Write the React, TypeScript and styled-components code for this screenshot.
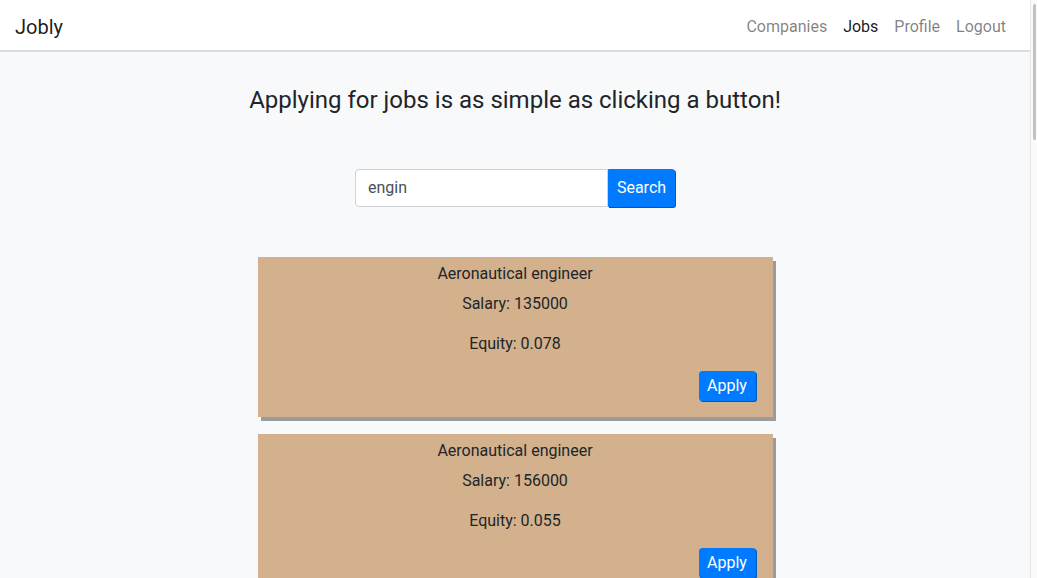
import React, { useState } from "react";
import styled, { createGlobalStyle } from "styled-components";

const GlobalStyle = createGlobalStyle`
  html, body {
    margin: 0;
    padding: 0;
    overflow: hidden;
  }
  body {
    background-color: #f8f9fa;
    color: #212529;
    font-family: Roboto, "Noto Sans", "Liberation Sans", sans-serif;
    font-size: 16px;
    line-height: 1.5;
  }
  *, *::before, *::after { box-sizing: border-box; }
`;

const Page = styled.div`
  display: flex;
  height: 100vh;
`;

const Content = styled.div`
  flex: 1;
  min-width: 0;
  overflow: hidden;
`;

// the page's scrollbar, as the browser draws it in the screenshot
const ScrollTrack = styled.div`
  flex: 0 0 7px;
  padding: 4px 1px 0 2px;
  background: #fafafa;
  border-left: 1px solid #e6e6e6;
`;

const ScrollThumb = styled.div`
  height: 136px;
  background: #c2c2c2;
  border-radius: 3px;
`;

const NavBar = styled.nav`
  display: flex;
  align-items: center;
  justify-content: space-between;
  height: 52px;
  padding: 4px 16px 0 15px;
  background: #fff;
  border-bottom: 2px solid #dcdcdc;
`;

const Brand = styled.a`
  font-size: 20px;
  color: rgba(0, 0, 0, 0.9);
  text-decoration: none;
`;

const NavLinks = styled.div`
  display: flex;
`;

const NavLink = styled.a<{ $active?: boolean }>`
  padding: 0 8px;
  font-size: 16px;
  color: ${(p) => (p.$active ? "rgba(0,0,0,0.9)" : "rgba(0,0,0,0.5)")};
  text-decoration: none;
  cursor: pointer;
`;

const Main = styled.main`
  display: flex;
  flex-direction: column;
  align-items: center;
  padding-top: 34px;
`;

const Heading = styled.h4`
  margin: 0 0 54px;
  font-size: 24px;
  font-weight: 400;
  line-height: 1.2;
`;

const SearchForm = styled.form`
  display: flex;
  margin-bottom: 50px;
`;

const SearchInput = styled.input`
  width: 253px;
  height: 38px;
  padding: 6px 12px;
  font: inherit;
  font-size: 16px;
  color: #495057;
  background: #fff;
  border: 1px solid #ced4da;
  border-radius: 4px 0 0 4px;
  outline: none;
`;

const BlueButton = styled.button`
  font: inherit;
  font-size: 16px;
  color: #fff;
  background-color: #007bff;
  border: 1px solid #007bff;
  border-radius: 3px;
  box-shadow: 1px 1px 0 #0059b8;
  cursor: pointer;
`;

const SearchButton = styled(BlueButton)`
  height: 38px;
  width: 67px;
  padding: 0;
  border-radius: 0 3px 3px 0;
`;

const ApplyButton = styled(BlueButton)`
  height: 30px;
  width: 57px;
  padding: 0;
  line-height: 28px;
`;

const JobList = styled.div`
  display: flex;
  flex-direction: column;
  gap: 17px;
  width: 515px;
  padding-bottom: 30px;
`;

const Card = styled.div`
  display: flex;
  flex-direction: column;
  align-items: center;
  padding: 7px 17px 16px;
  background-color: #d3b18d;
  box-shadow: 3px 4px 0 #9b9b9b;
`;

const JobTitle = styled.h6`
  margin: 0 0 9px;
  font-size: 16px;
  font-weight: 400;
  line-height: 1.2;
`;

const Detail = styled.p<{ $last?: boolean }>`
  margin: 0 0 ${(p) => (p.$last ? "15px" : "16px")};
`;

const ButtonRow = styled.div`
  display: flex;
  justify-content: flex-end;
  width: 100%;
`;

interface Job {
  title: string;
  salary: number;
  equity: string;
}

const jobs: Job[] = [
  { title: "Aeronautical engineer", salary: 135000, equity: "0.078" },
  { title: "Aeronautical engineer", salary: 156000, equity: "0.055" },
  { title: "Agricultural engineer", salary: 99000, equity: "0.021" },
  { title: "Automotive engineer", salary: 121000, equity: "0" },
];

export default function App() {
  const [term, setTerm] = useState("engin");
  return (
    <Page>
      <GlobalStyle />
      <Content>
        <NavBar>
          <Brand href="#">Jobly</Brand>
          <NavLinks>
            <NavLink>Companies</NavLink>
            <NavLink $active>Jobs</NavLink>
            <NavLink>Profile</NavLink>
            <NavLink>Logout</NavLink>
          </NavLinks>
        </NavBar>
        <Main>
          <Heading>Applying for jobs is as simple as clicking a button!</Heading>
          <SearchForm onSubmit={(e) => e.preventDefault()}>
            <SearchInput value={term} onChange={(e) => setTerm(e.target.value)} />
            <SearchButton type="submit">Search</SearchButton>
          </SearchForm>
          <JobList>
            {jobs.map((job, i) => (
              <Card key={i}>
                <JobTitle>{job.title}</JobTitle>
                <Detail>Salary: {job.salary}</Detail>
                <Detail $last>Equity: {job.equity}</Detail>
                <ButtonRow>
                  <ApplyButton>Apply</ApplyButton>
                </ButtonRow>
              </Card>
            ))}
          </JobList>
        </Main>
      </Content>
      <ScrollTrack>
        <ScrollThumb />
      </ScrollTrack>
    </Page>
  );
}
